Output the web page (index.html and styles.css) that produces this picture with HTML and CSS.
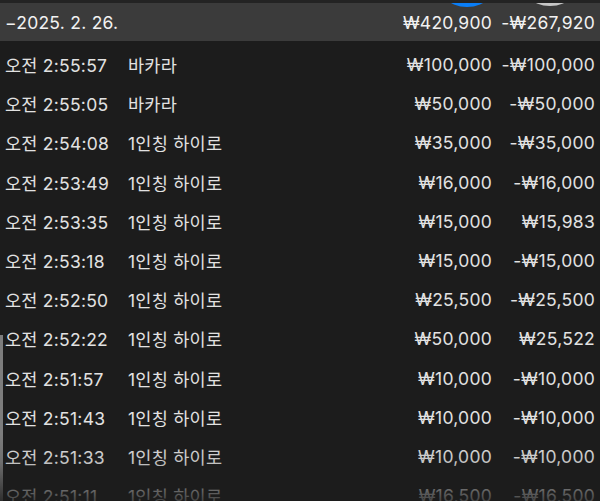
FILE: index.html
```html
<!DOCTYPE html>
<html lang="ko">
<head>
  <meta charset="utf-8">
  <title>거래 내역</title>
  <link rel="stylesheet" href="styles.css">
</head>
<body>
  <span class="dot dot--blue"></span>
  <span class="dot dot--gray"></span>

  <div class="day">
    <span class="day__date">−2025. 2. 26.</span>
    <span class="day__bet">₩420,900</span>
    <span class="day__result">-₩267,920</span>
  </div>

  <ul id="rows" class="rows">
    <li class="row"><span>오전 2:55:57</span><span>바카라</span><span class="num">₩100,000</span><span class="num">-₩100,000</span></li>
    <li class="row"><span>오전 2:55:05</span><span>바카라</span><span class="num">₩50,000</span><span class="num">-₩50,000</span></li>
    <li class="row"><span>오전 2:54:08</span><span>1인칭 하이로</span><span class="num">₩35,000</span><span class="num">-₩35,000</span></li>
    <li class="row"><span>오전 2:53:49</span><span>1인칭 하이로</span><span class="num">₩16,000</span><span class="num">-₩16,000</span></li>
    <li class="row"><span>오전 2:53:35</span><span>1인칭 하이로</span><span class="num">₩15,000</span><span class="num">₩15,983</span></li>
    <li class="row"><span>오전 2:53:18</span><span>1인칭 하이로</span><span class="num">₩15,000</span><span class="num">-₩15,000</span></li>
    <li class="row"><span>오전 2:52:50</span><span>1인칭 하이로</span><span class="num">₩25,500</span><span class="num">-₩25,500</span></li>
    <li class="row"><span>오전 2:52:22</span><span>1인칭 하이로</span><span class="num">₩50,000</span><span class="num">₩25,522</span></li>
    <li class="row"><span>오전 2:51:57</span><span>1인칭 하이로</span><span class="num">₩10,000</span><span class="num">-₩10,000</span></li>
    <li class="row"><span>오전 2:51:43</span><span>1인칭 하이로</span><span class="num">₩10,000</span><span class="num">-₩10,000</span></li>
    <li class="row"><span>오전 2:51:33</span><span>1인칭 하이로</span><span class="num">₩10,000</span><span class="num">-₩10,000</span></li>
    <li class="row"><span>오전 2:51:11</span><span>1인칭 하이로</span><span class="num">₩16,500</span><span class="num">-₩16,500</span></li>
  </ul>

  <span class="scroll"></span>
  <div class="fade"></div>
</body>
</html>
```

FILE: styles.css
```css
html, body {
  height: 100%;
}

body {
  margin: 0;
  overflow: hidden;
  position: relative;
  background-color: #1c1c1c;
  color: #e2e2e2;
  font-family: Inter, "Noto Sans CJK KR", sans-serif;
  font-size: 17.5px;
  letter-spacing: 0.25px;
  border-top: 3px solid #232323;
}

.day {
  display: grid;
  grid-template-columns: 1fr auto 103px;
  align-items: center;
  height: 38px;
  padding: 0 5px;
  background-color: #3b3b3b;
  color: #f2f2f2;
}

.day__bet,
.day__result {
  text-align: right;
}

.rows {
  list-style-type: none;
  margin: 0;
  padding: 4px 0 0;
}

.row {
  display: grid;
  grid-template-columns: 123px 1fr auto 103px;
  align-items: center;
  height: 39.2px;
  padding: 0 5px;
}

.num {
  text-align: right;
}

/* round buttons of the bar above, only their lower edge shows */
.dot {
  position: absolute;
  z-index: 2;
  width: 68px;
  height: 68px;
  border-radius: 50%;
}

.dot--blue {
  left: 433px;
  top: -64px;
  background-color: #0a7ef7;
}

.dot--gray {
  left: 516px;
  top: -65px;
  background-color: #c6c6c6;
}

.scroll {
  position: absolute;
  left: 0;
  top: 332px;
  bottom: 0;
  width: 3px;
  background-color: #7d7d7d;
}

.fade {
  position: absolute;
  left: 0;
  right: 0;
  bottom: 0;
  height: 70px;
  background: linear-gradient(to bottom, rgba(28,28,28,0), rgba(28,28,28,0.15) 40%, rgba(28,28,28,0.85));
}
```
